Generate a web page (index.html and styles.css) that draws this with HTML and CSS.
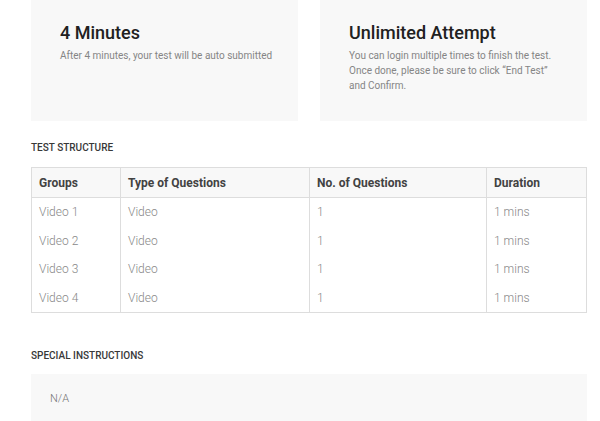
FILE: index.html
```html
<!DOCTYPE html>
<html lang="en">
<head>
<meta charset="utf-8">
<title>Test Instructions</title>
<link rel="stylesheet" href="styles.css">
</head>
<body>
<main class="page">
  <section class="cards">
    <div class="card">
      <h2 class="card-title">4 Minutes</h2>
      <p class="card-text card-text-single">After 4 minutes, your test will be auto submitted</p>
    </div>
    <div class="card">
      <h2 class="card-title">Unlimited Attempt</h2>
      <p class="card-text">You can login multiple times to finish the test. Once done, please be sure to click “End Test” and Confirm.</p>
    </div>
  </section>

  <h3 class="section-label label-structure">TEST STRUCTURE</h3>
  <table class="structure">
    <colgroup>
      <col class="c-group">
      <col class="c-type">
      <col class="c-count">
      <col class="c-duration">
    </colgroup>
    <thead>
      <tr><th>Groups</th><th>Type of Questions</th><th>No. of Questions</th><th>Duration</th></tr>
    </thead>
    <tbody>
      <tr><td>Video 1</td><td>Video</td><td>1</td><td>1 mins</td></tr>
      <tr><td>Video 2</td><td>Video</td><td>1</td><td>1 mins</td></tr>
      <tr><td>Video 3</td><td>Video</td><td>1</td><td>1 mins</td></tr>
      <tr><td>Video 4</td><td>Video</td><td>1</td><td>1 mins</td></tr>
    </tbody>
  </table>

  <h3 class="section-label label-special">SPECIAL INSTRUCTIONS</h3>
  <div class="note">N/A</div>
</main>
</body>
</html>
```
FILE: styles.css
```css
* { box-sizing: border-box; }

html, body {
  margin: 0;
  padding: 0;
  background: #ffffff;
}

body {
  font-family: Roboto, "Liberation Sans", sans-serif;
  color: #212121;
}

.page {
  padding: 0 13px 0 31px;
}

/* summary cards */
.cards {
  display: flex;
  gap: 22px;
}

.card {
  flex: 1 1 0;
  min-width: 0;
  height: 121px;
  background: #f8f8f8;
  padding: 22px 29px 0 29px;
}

.card-title {
  margin: 0;
  font-size: 18px;
  font-weight: 500;
  line-height: 21px;
  color: #212121;
}

.card-text {
  margin: 5px 0 0;
  font-size: 10px;
  font-weight: 400;
  line-height: 15px;
  color: #858585;
}

/* short caption stays on one line */
.card-text-single {
  white-space: nowrap;
}

/* section labels */
.section-label {
  margin: 0;
  font-size: 10px;
  font-weight: 500;
  line-height: 12px;
  color: #383838;
}

.label-structure { margin-top: 21px; }
.label-special { margin-top: 37px; }

/* test structure table */
.structure {
  margin-top: 13px;
  width: 100%;
  border-collapse: collapse;
  table-layout: fixed;
  border: 1px solid #dddddd;
}

.c-group { width: 89px; }
.c-type { width: 189px; }
.c-count { width: 177px; }
.c-duration { width: auto; }

.structure th,
.structure td {
  border-left: 1px solid #dddddd;
  border-right: 1px solid #dddddd;
  padding: 0 7px;
  text-align: left;
  vertical-align: middle;
}

.structure th {
  height: 30px;
  background: #f8f8f8;
  border-bottom: 1px solid #dddddd;
  font-size: 12px;
  font-weight: 700;
  color: #424242;
}

.structure td {
  height: 28.75px;
  font-size: 12px;
  font-weight: 300;
  color: #888888;
}

/* special instructions box */
.note {
  margin-top: 12px;
  background: #f8f8f8;
  padding: 18px 19px 20px;
  font-size: 11px;
  font-weight: 300;
  line-height: 13px;
  color: #757575;
}
```
